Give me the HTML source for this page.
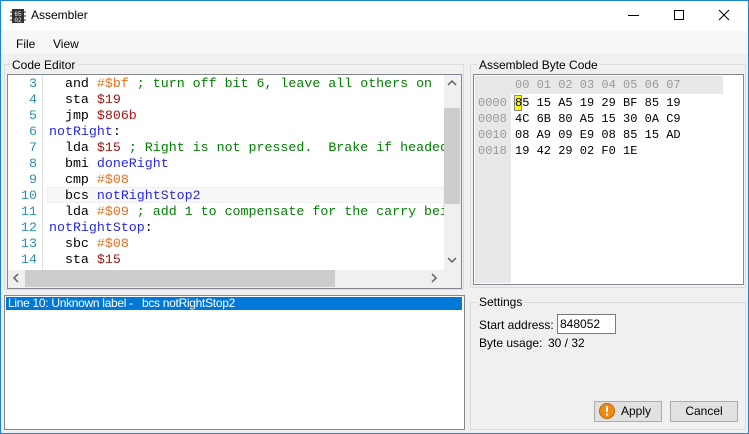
<!DOCTYPE html>
<html><head><meta charset="utf-8"><style>
*{margin:0;padding:0;box-sizing:border-box}
body{width:749px;height:434px;overflow:hidden;background:#f0f0f0;font-family:"Liberation Sans",sans-serif;font-size:12px;color:#000;position:relative}
.a{position:absolute}
.mono{font-family:"Liberation Mono",monospace}
.gb{position:absolute;border:1px solid #dcdcdc}
.lbl{position:absolute;background:#f0f0f0;padding:0 2px;font-size:12px;line-height:14px}
.code div{height:16px;line-height:16px;white-space:pre;font-size:13.3px}
.k{color:#000}.d{color:#a31515}.h{color:#e0701f}.c{color:#008000}.l{color:#2828e8}
.num div{height:16px;line-height:16px;text-align:right;color:#2b91af;font-size:13.3px}
.hex div{height:16px;line-height:16px;white-space:pre;font-size:12px}
.btn{position:absolute;background:#e1e1e1;border:1px solid #adadad;text-align:center;line-height:18px;font-size:12px}
</style></head><body>
<div class="a" style="left:0;top:0;width:749px;height:434px;border:1px solid #1883d7;border-top:none"></div>
<div class="a" style="left:0;top:0;width:749px;height:1px;background:#1883d7"></div>
<!-- title -->
<div class="a" style="left:1px;top:1px;width:747px;height:30px;background:#fff"></div>
<svg class="a" style="left:10px;top:8px" width="16" height="16" viewBox="0 0 16 16"><rect x="2" y="1" width="12" height="14" fill="#333"/><g stroke="#333"><line x1="0" y1="4" x2="2" y2="4"/><line x1="0" y1="8" x2="2" y2="8"/><line x1="0" y1="12" x2="2" y2="12"/><line x1="14" y1="4" x2="16" y2="4"/><line x1="14" y1="8" x2="16" y2="8"/><line x1="14" y1="12" x2="16" y2="12"/></g><text x="8" y="8" font-size="6" fill="#fff" text-anchor="middle" font-family="Liberation Mono">65</text><text x="8" y="14" font-size="6" fill="#fff" text-anchor="middle" font-family="Liberation Mono">02</text></svg>
<div class="a" style="left:31px;top:8px;font-size:12px">Assembler</div>
<div class="a" style="left:628px;top:15px;width:11px;height:1px;background:#000"></div>
<div class="a" style="left:674px;top:10px;width:10px;height:10px;border:1px solid #000"></div>
<svg class="a" style="left:718px;top:9px" width="12" height="12"><path d="M1 1L11 11M11 1L1 11" stroke="#000"/></svg>
<!-- menu -->
<div class="a" style="left:1px;top:31px;width:747px;height:23px;background:#f7f7f7"></div>
<div class="a" style="left:16px;top:37px">File</div>
<div class="a" style="left:53px;top:37px">View</div>
<!-- code editor group -->
<div class="gb" style="left:4px;top:64px;width:460px;height:226px"></div>
<div class="lbl" style="left:10px;top:58px">Code Editor</div>
<div class="a" style="left:7px;top:74px;width:455px;height:215px;border:1px solid #828790;background:#fff"></div>
<div class="a" style="left:42px;top:75px;width:1px;height:195px;background:#e0e0e0"></div>
<div class="a" style="left:47px;top:187px;width:397px;height:16px;background:#f8f8f8;border:1px solid #efefef"></div>
<div class="a num mono" style="left:8px;top:76px;width:29px">
<div>3</div><div>4</div><div>5</div><div>6</div><div>7</div><div>8</div><div>9</div><div>10</div><div>11</div><div>12</div><div>13</div><div>14</div></div>
<div class="a code mono" style="left:49px;top:76px;width:395px;overflow:hidden">
<div>  and <span class="h">#$bf</span> <span class="c">; turn off bit 6, leave all others on</span></div>
<div>  sta <span class="d">$19</span></div>
<div>  jmp <span class="d">$806b</span></div>
<div><span class="l">notRight</span>:</div>
<div>  lda <span class="d">$15</span> <span class="c">; Right is not pressed.  Brake if headed</span></div>
<div>  bmi <span class="l">doneRight</span></div>
<div>  cmp <span class="h">#$08</span></div>
<div>  bcs <span class="l">notRightStop2</span></div>
<div>  lda <span class="h">#$09</span> <span class="c">; add 1 to compensate for the carry being</span></div>
<div><span class="l">notRightStop</span>:</div>
<div>  sbc <span class="h">#$08</span></div>
<div>  sta <span class="d">$15</span></div>
</div>
<!-- vscroll -->
<div class="a" style="left:444px;top:75px;width:17px;height:195px;background:#f0f0f0"></div>
<div class="a" style="left:444px;top:108px;width:16px;height:96px;background:#cdcdcd"></div>
<svg class="a" style="left:447px;top:79px" width="10" height="8"><path d="M1 6L5 2L9 6" stroke="#606060" stroke-width="1.5" fill="none"/></svg>
<svg class="a" style="left:447px;top:256px" width="10" height="8"><path d="M1 2L5 6L9 2" stroke="#606060" stroke-width="1.5" fill="none"/></svg>
<!-- hscroll -->
<div class="a" style="left:8px;top:270px;width:453px;height:18px;background:#f0f0f0"></div>
<div class="a" style="left:25px;top:270px;width:310px;height:17px;background:#cdcdcd"></div>
<svg class="a" style="left:12px;top:273px" width="8" height="10"><path d="M6 1L2 5L6 9" stroke="#606060" stroke-width="1.5" fill="none"/></svg>
<svg class="a" style="left:430px;top:273px" width="8" height="10"><path d="M2 1L6 5L2 9" stroke="#606060" stroke-width="1.5" fill="none"/></svg>
<!-- error list -->
<div class="a" style="left:4px;top:295px;width:461px;height:135px;border:1px solid #828790;background:#fff"></div>
<div class="a" style="left:6px;top:297px;width:456px;height:13px;background:#0078d7;color:#fff;line-height:13px;padding-left:2px;font-size:12px;letter-spacing:-0.3px">Line 10: Unknown label -&nbsp;&nbsp; bcs notRightStop2</div>
<!-- byte group -->
<div class="gb" style="left:470px;top:64px;width:276px;height:224px"></div>
<div class="lbl" style="left:477px;top:58px">Assembled Byte Code</div>
<div class="a" style="left:473px;top:74px;width:271px;height:211px;border:1px solid #828790;background:#fff"></div>
<div class="a" style="left:475px;top:76px;width:36px;height:207px;background:#e8e8e8"></div>
<div class="a" style="left:475px;top:76px;width:248px;height:18px;background:#e8e8e8"></div>
<div class="a mono hex" style="left:515px;top:76px;color:#999"><div style="line-height:18px;height:18px">00 01 02 03 04 05 06 07</div></div>
<div class="a mono hex" style="left:478px;top:95px;color:#999"><div>0000</div><div>0008</div><div>0010</div><div>0018</div></div>
<div class="a" style="left:514px;top:95px;width:8px;height:16px;background:#ffff00;border:1px solid #888"></div>
<div class="a mono hex" style="left:515px;top:95px"><div>85 15 A5 19 29 BF 85 19</div><div>4C 6B 80 A5 15 30 0A C9</div><div>08 A9 09 E9 08 85 15 AD</div><div>19 42 29 02 F0 1E</div></div>
<!-- settings -->
<div class="gb" style="left:470px;top:302px;width:276px;height:128px"></div>
<div class="lbl" style="left:477px;top:295px">Settings</div>
<div class="a" style="left:479px;top:318px">Start address: $</div>
<div class="a" style="left:557px;top:314px;width:59px;height:20px;border:1px solid #7a7a7a;background:#fff;padding:2px 2px;line-height:14px">848052</div>
<div class="a" style="left:479px;top:336px">Byte usage:</div>
<div class="a" style="left:548px;top:336px">30 / 32</div>
<div class="btn" style="left:594px;top:401px;width:68px;height:21px;padding-left:16px">Apply</div>
<svg class="a" style="left:599px;top:403px" width="16" height="16"><circle cx="8" cy="8" r="7.5" fill="#f08a18" stroke="#c86000"/><rect x="7" y="3" width="2" height="6" fill="#fff"/><rect x="7" y="10.5" width="2" height="2" fill="#fff"/></svg>
<div class="btn" style="left:670px;top:401px;width:68px;height:21px">Cancel</div>
</body></html>
